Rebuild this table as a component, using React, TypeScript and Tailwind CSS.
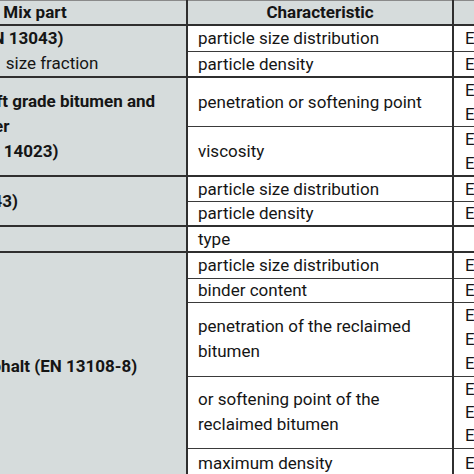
import React from "react";

const thick = "border-t-2 border-[#2f2f2f]";
const thin = "border-t border-[#3a3a3a]";

type Row = {
  h: string;
  line: string;
  ch: React.ReactNode;
  tm: React.ReactNode;
};

const Lines = ({ children }: { children: React.ReactNode }) => (
  <span className="leading-[24px]">{children}</span>
);

export default function App() {
  const rows: Row[] = [
    { h: "h-[26px]", line: thick, ch: "particle size distribution", tm: "EN 933-1" },
    { h: "h-[25px]", line: thin, ch: "particle density", tm: "EN 1097-6" },
    { h: "h-[49px]", line: thick, ch: "penetration or softening point", tm: <Lines>EN 1426<br />EN 1427</Lines> },
    { h: "h-[50px]", line: thin, ch: "viscosity", tm: <Lines>EN 12595<br />EN 12596</Lines> },
    { h: "h-[25px]", line: thick, ch: "particle size distribution", tm: "EN 933-10" },
    { h: "h-[25px]", line: thin, ch: "particle density", tm: "EN 1097-7" },
    { h: "h-[26px]", line: thick, ch: "type", tm: "" },
    { h: "h-[26px]", line: thick, ch: "particle size distribution", tm: "EN 12697-2" },
    { h: "h-[24px]", line: thin, ch: "binder content", tm: "EN 12697-1" },
    {
      h: "h-[74px]",
      line: thin,
      ch: <span className="leading-[25px]">penetration of the reclaimed<br />bitumen</span>,
      tm: <Lines>EN 12697-3<br />EN 12697-4<br />EN 1426</Lines>,
    },
    {
      h: "h-[72px]",
      line: thin,
      ch: <span className="leading-[25px]">or softening point of the<br />reclaimed bitumen</span>,
      tm: <span className="leading-[23px]">EN 12697-3<br />EN 12697-4<br />EN 1427</span>,
    },
    { h: "h-[30px]", line: thin, ch: "maximum density", tm: "EN 12697-5" },
  ];

  const mix: { span: number; pad: string; text: React.ReactNode }[] = [
    {
      span: 2,
      pad: "pl-[9px]",
      text: (
        <span className="leading-[25px]">
          <span className="font-bold">Aggregate (EN 13043)</span>
          <br />
          Aggregate 0/1 size fraction
        </span>
      ),
    },
    {
      span: 2,
      pad: "pl-[5px]",
      text: (
        <span className="font-bold leading-[25px]">
          Paving and soft grade bitumen and
          <br />
          Modified binder
          <br />
          (EN 12591, EN 14023)
        </span>
      ),
    },
    { span: 2, pad: "pl-[5px]", text: <span className="font-bold">Filler (EN 13043)</span> },
    { span: 1, pad: "pl-[5px]", text: <span className="font-bold">Fibres</span> },
    { span: 5, pad: "pl-[5px]", text: <span className="font-bold">Reclaimed asphalt (EN 13108-8)</span> },
  ];

  const starts = [0, 2, 4, 6, 7];

  return (
    <div className="w-[474px] h-[474px] overflow-hidden bg-white font-['Roboto',sans-serif] text-[17px] leading-[22px] text-[#151515]">
      <table className="-ml-[116px] w-[729px] table-fixed border-collapse border-t border-[#8a8a8a]">
        <colgroup>
          <col className="w-[303px]" />
          <col className="w-[266px]" />
          <col className="w-[160px]" />
        </colgroup>
        <thead>
          <tr className="h-[24px] bg-[#d6dcdc]">
            <th className="border-r-2 border-[#2f2f2f] text-center font-bold">Mix part</th>
            <th className="border-r-2 border-[#2f2f2f] text-center font-bold">Characteristic</th>
            <th className="text-center font-bold">Test method</th>
          </tr>
        </thead>
        <tbody>
          {rows.map((r, i) => {
            const m = starts.indexOf(i);
            return (
              <tr key={i} className={r.h}>
                {m >= 0 && (
                  <td
                    rowSpan={mix[m].span}
                    className={`${thick} border-r-2 border-r-[#2f2f2f] bg-[#d6dcdc] ${mix[m].pad} align-middle`}
                  >
                    {mix[m].text}
                  </td>
                )}
                <td className={`${r.line} border-r-2 border-r-[#2f2f2f] pl-[10px] align-middle`}>{r.ch}</td>
                <td className={`${r.line} pl-[11px] align-middle whitespace-nowrap`}>{r.tm}</td>
              </tr>
            );
          })}
        </tbody>
      </table>
    </div>
  );
}
